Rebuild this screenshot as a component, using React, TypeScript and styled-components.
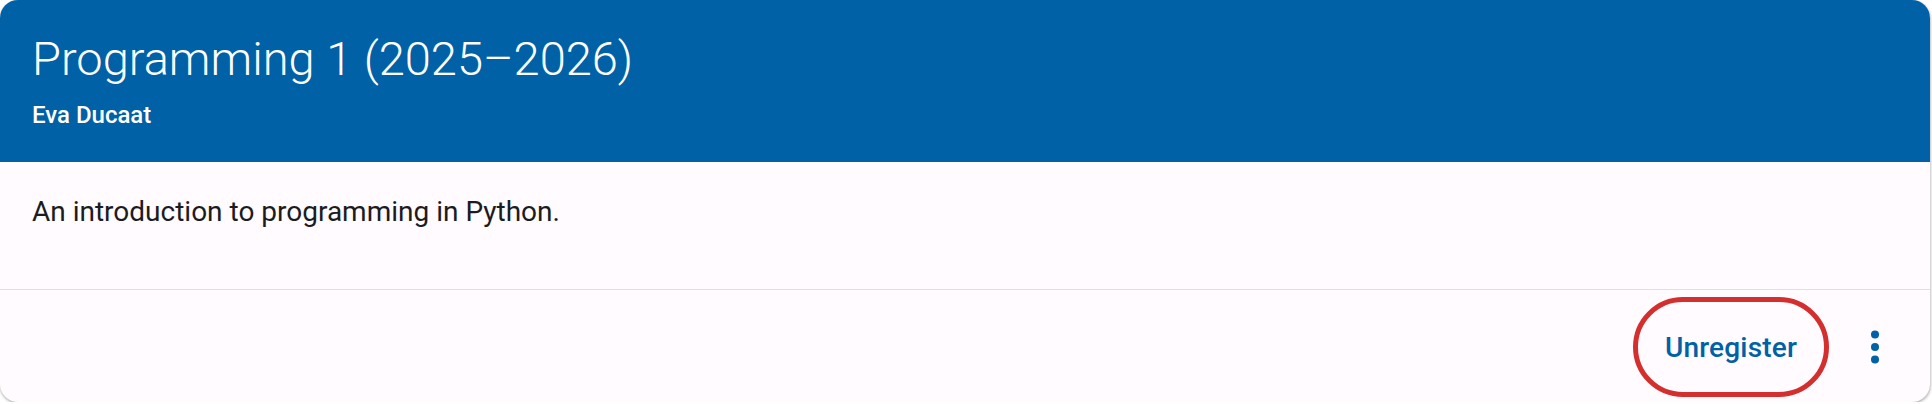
import React from "react";
import styled, { createGlobalStyle } from "styled-components";

const Global = createGlobalStyle`
  html, body { margin: 0; padding: 0; background: #ffffff; }
  body { font-family: Roboto, "Noto Sans", sans-serif; }
  * { box-sizing: border-box; }
`;

const Card = styled.article`
  width: 1930px;
  height: 402px;
  background: #fffbfe;
  border-radius: 18px;
  overflow: hidden;
  box-shadow: 0 1px 3px rgba(0, 0, 0, 0.25), 1px 2px 3px rgba(0, 0, 0, 0.12);
  display: flex;
  flex-direction: column;
`;

const Header = styled.header`
  background: #0061a6;
  height: 162px;
  padding: 33px 32px 0 32px;
  display: flex;
  flex-direction: column;
  gap: 14px;
  color: #ffffff;
`;

const Title = styled.h1`
  margin: 0;
  font-size: 47px;
  line-height: 52px;
  font-weight: 300;
  letter-spacing: 0;
`;

const Subtitle = styled.div`
  font-size: 24px;
  line-height: 32px;
  font-weight: 500;
`;

const Body = styled.section`
  height: 128px;
  padding: 32px 32px 0 32px;
  font-size: 28px;
  line-height: 36px;
  color: #1c1b1f;
  border-bottom: 1px solid #e1dfe3;
`;

const Actions = styled.footer`
  flex: 1;
  display: flex;
  align-items: center;
  justify-content: flex-end;
  gap: 22px;
  padding: 2px 31px 0 0;
`;

const TextButton = styled.button`
  height: 100px;
  width: 196px;
  border: 5px solid #d32f2f;
  border-radius: 50px;
  background: transparent;
  color: #0061a6;
  font-family: Roboto, sans-serif;
  font-size: 28px;
  font-weight: 500;
  letter-spacing: 0.2px;
  display: flex;
  align-items: center;
  justify-content: center;
  padding: 0;
  cursor: pointer;
`;

const IconButton = styled.button`
  width: 48px;
  height: 48px;
  border: none;
  background: transparent;
  padding: 0;
  display: flex;
  align-items: center;
  justify-content: center;
  color: #0061a6;
  cursor: pointer;
`;

const Kebab = () => (
  <svg width="10" height="34" viewBox="0 0 10 34" aria-hidden="true">
    <circle cx="5" cy="4.5" r="4" fill="currentColor" />
    <circle cx="5" cy="17" r="4" fill="currentColor" />
    <circle cx="5" cy="29.5" r="4" fill="currentColor" />
  </svg>
);

export default function App() {
  return (
    <>
      <Global />
      <Card>
        <Header>
          <Title>Programming 1 (2025–2026)</Title>
          <Subtitle>Eva Ducaat</Subtitle>
        </Header>
        <Body>An introduction to programming in Python.</Body>
        <Actions>
          <TextButton>Unregister</TextButton>
          <IconButton aria-label="More options">
            <Kebab />
          </IconButton>
        </Actions>
      </Card>
    </>
  );
}
